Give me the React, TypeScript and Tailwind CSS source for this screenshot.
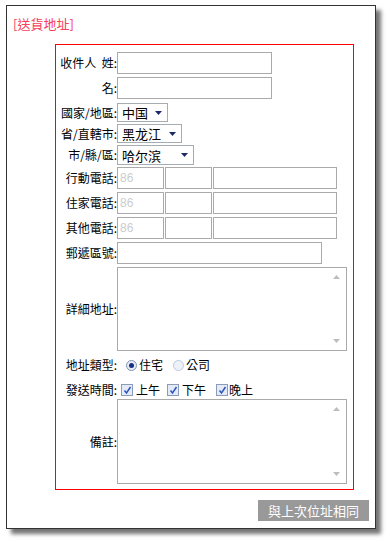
import React from 'react';

const cjk = { fontFamily: '"Noto Sans CJK TC", "Noto Sans CJK SC", sans-serif' };

const Label: React.FC<{ text: string }> = ({ text }) => (
    <div className="w-[61px] shrink-0 text-right text-[12px] leading-[14px] text-black whitespace-pre">{text}</div>
);

const Select: React.FC<{ value: string; width: string }> = ({ value, width }) => (
    <div className={`${width} h-full border border-[#a5acb2] bg-white flex items-center justify-between pl-[4px] pr-[5px]`}>
        <span className="text-[13px] leading-[15px]">{value}</span>
        <svg width="7" height="4" viewBox="0 0 7 4">
            <path d="M0 0 H7 L3.5 4 Z" fill="#1c2a6b" />
        </svg>
    </div>
);

const TextArea: React.FC = () => (
    <div className="relative w-[230px] h-full border border-[#aaaaaa] bg-white">
        <svg className="absolute right-[6px] top-[7px]" width="7" height="4" viewBox="0 0 7 4">
            <path d="M0 4 H7 L3.5 0 Z" fill="#bdbdbd" />
        </svg>
        <svg className="absolute right-[6px] bottom-[7px]" width="7" height="4" viewBox="0 0 7 4">
            <path d="M0 0 H7 L3.5 4 Z" fill="#bdbdbd" />
        </svg>
    </div>
);

const Radio: React.FC<{ checked?: boolean }> = ({ checked }) => (
    <span className={`w-[11px] h-[11px] rounded-full border flex items-center justify-center ${checked ? 'border-[#7f93b3] bg-[#e6ecf5]' : 'border-[#bccadb] bg-[#eef2f8]'}`}>
        {checked && <span className="w-[5px] h-[5px] rounded-full bg-[#1a2f80]" />}
    </span>
);

const Check: React.FC = () => (
    <span className="w-[12px] h-[12px] border border-[#8a9cba] bg-[#e4ebf6] flex items-center justify-center">
        <svg width="9" height="9" viewBox="0 0 9 9">
            <path d="M1.5 4.5 L3.5 7 L7.5 1" stroke="#2a56c0" strokeWidth="1.5" fill="none" />
        </svg>
    </span>
);

const Phone: React.FC = () => (
    <div className="flex h-full">
        <div className="w-[47px] h-full border border-[#aaaaaa] flex items-center pl-[2px] text-[12px] text-[#cccccc]" style={{ fontFamily: '"Liberation Sans", Arial, sans-serif' }}>86</div>
        <div className="w-[47px] h-full border border-[#aaaaaa] ml-[1px]" />
        <div className="w-[124px] h-full border border-[#aaaaaa] ml-[1px]" />
    </div>
);

export default function App() {
    return (
        <div className="w-[387px] h-[541px] bg-white pt-[5px] pl-[6px]" style={cjk}>
            <div className="w-[370px] h-[524px] border border-[#333333] bg-white shadow-[5px_5px_4px_rgba(0,0,0,0.55)]">
                <div className="pt-[10px] pl-[6px] h-[25px] text-[13px] leading-[15px] text-[#f5405e]">[送貨地址]</div>
                <div className="ml-[48px] mt-[13px] w-[299px] border border-[#ff0000] pt-[7px] pb-[5px]">
                    <div className="flex items-center h-[22px]">
                        <Label text="收件人  姓:" />
                        <div className="w-[155px] h-full border border-[#aaaaaa]" />
                    </div>
                    <div className="flex items-center h-[22px] mt-[3px]">
                        <Label text="名:" />
                        <div className="w-[155px] h-full border border-[#aaaaaa]" />
                    </div>
                    <div className="flex items-center h-[19px] mt-[4px]">
                        <Label text="國家/地區:" />
                        <Select value="中国" width="w-[51px]" />
                    </div>
                    <div className="flex items-center h-[19px] mt-[2px]">
                        <Label text="省/直轄市:" />
                        <Select value="黑龙江" width="w-[65px]" />
                    </div>
                    <div className="flex items-center h-[20px] mt-[2px]">
                        <Label text="市/縣/區:" />
                        <Select value="哈尔滨" width="w-[77px]" />
                    </div>
                    <div className="flex items-center h-[22px] mt-[2px]">
                        <Label text="行動電話:" />
                        <Phone />
                    </div>
                    <div className="flex items-center h-[22px] mt-[3px]">
                        <Label text="住家電話:" />
                        <Phone />
                    </div>
                    <div className="flex items-center h-[22px] mt-[3px]">
                        <Label text="其他電話:" />
                        <Phone />
                    </div>
                    <div className="flex items-center h-[22px] mt-[3px]">
                        <Label text="郵遞區號:" />
                        <div className="w-[205px] h-full border border-[#aaaaaa]" />
                    </div>
                    <div className="flex items-center h-[84px] mt-[3px]">
                        <Label text="詳細地址:" />
                        <TextArea />
                    </div>
                    <div className="flex items-center h-[16px] mt-[6px] text-[12px]">
                        <Label text="地址類型:" />
                        <span className="ml-[9px]"><Radio checked /></span>
                        <span className="ml-[2px]">住宅</span>
                        <span className="ml-[10px]"><Radio /></span>
                        <span className="ml-[2px]">公司</span>
                    </div>
                    <div className="flex items-center h-[16px] mt-[9px] text-[12px]">
                        <Label text="發送時間:" />
                        <span className="ml-[4px]"><Check /></span>
                        <span className="ml-[3px]">上午</span>
                        <span className="ml-[7px]"><Check /></span>
                        <span className="ml-[3px]">下午</span>
                        <span className="ml-[10px]"><Check /></span>
                        <span className="ml-[1px]">晚上</span>
                    </div>
                    <div className="flex items-center h-[85px] mt-[1px]">
                        <Label text="備註:" />
                        <TextArea />
                    </div>
                </div>
                <div className="flex justify-end mt-[10px] pr-[6px]">
                    <div className="w-[111px] h-[21px] bg-[#999999] text-white text-[13px] leading-[21px] text-center">與上次位址相同</div>
                </div>
            </div>
        </div>
    );
}
